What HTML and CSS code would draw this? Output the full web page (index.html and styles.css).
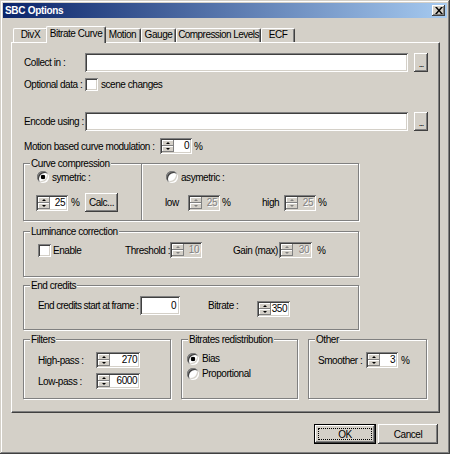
FILE: index.html
```html
<!DOCTYPE html>
<html>
<head>
<meta charset="utf-8">
<title>SBC Options</title>
<link rel="stylesheet" href="styles.css">
</head>
<body>
<div class="window">
  <div class="titlebar">
    <span class="title">SBC Options</span>
    <span class="close"><svg width="8" height="7" viewBox="0 0 8 7"><path d="M0 0h2l2 2.5L6 0h2L5 3.5 8 7H6L4 4.5 2 7H0l3-3.5z"/></svg></span>
  </div>
  <div class="tabs">
    <div class="tab w-divx">DivX</div>
    <div class="tab active w-bitrate">Bitrate Curve</div>
    <div class="tab w-motion">Motion</div>
    <div class="tab w-gauge">Gauge</div>
    <div class="tab w-comp">Compression Levels</div>
    <div class="tab w-ecf">ECF</div>
  </div>
  <div class="panel">
    <div class="row r-collect">
      <span class="lbl w61">Collect in :</span>
      <span class="edit path"></span>
      <span class="btn dots">...</span>
    </div>
    <div class="row r-optional">
      <span class="lbl w61">Optional data :</span>
      <span class="check"></span>
      <span class="ctext">scene changes</span>
    </div>
    <div class="row r-encode">
      <span class="lbl w61">Encode using :</span>
      <span class="edit path"></span>
      <span class="btn dots">...</span>
    </div>
    <div class="row r-motion">
      <span class="lbl w136">Motion based curve modulation :</span>
      <span class="spin w32"><span class="arrows"><i class="up"></i><i class="dn"></i></span><span class="val">0</span></span>
      <span class="pct m2">%</span>
    </div>

    <div class="group g-curve">
      <span class="gtitle">Curve compression</span>
      <div class="cc-left">
        <div class="radio-row"><span class="radio on"></span><span class="rtext">symetric :</span></div>
        <div class="cc-row shift">
          <span class="spin w32"><span class="arrows"><i class="up"></i><i class="dn"></i></span><span class="val">25</span></span>
          <span class="pct m3 w14">%</span>
          <span class="btn calc">Calc...</span>
        </div>
      </div>
      <div class="cc-right">
        <div class="radio-row"><span class="radio"></span><span class="rtext">asymetric :</span></div>
        <div class="cc-row shift">
          <span class="lbl w23">low</span>
          <span class="spin dis w32"><span class="arrows"><i class="up"></i><i class="dn"></i></span><span class="val">25</span></span>
          <span class="pct m2 w40">%</span>
          <span class="lbl w22">high</span>
          <span class="spin dis w32"><span class="arrows"><i class="up"></i><i class="dn"></i></span><span class="val">25</span></span>
          <span class="pct m2">%</span>
        </div>
      </div>
    </div>

    <div class="group g-lum">
      <span class="gtitle">Luminance correction</span>
      <div class="grow-row">
        <span class="check"></span>
        <span class="lbl w72 m2">Enable</span>
        <span class="lbl w45">Threshold :</span>
        <span class="spin dis w32"><span class="arrows"><i class="up"></i><i class="dn"></i></span><span class="val">10</span></span>
        <span class="lbl w46 m31">Gain (max) :</span>
        <span class="spin dis w33"><span class="arrows"><i class="up"></i><i class="dn"></i></span><span class="val">30</span></span>
        <span class="pct m5">%</span>
      </div>
    </div>

    <div class="group g-end">
      <span class="gtitle">End credits</span>
      <div class="end-row">
        <span class="lbl w102 tight">End credits start at frame :</span>
        <span class="edit num">0</span>
        <span class="lbl w49 m28">Bitrate :</span>
        <span class="spin w33 low"><span class="arrows"><i class="up"></i><i class="dn"></i></span><span class="val">350</span></span>
      </div>
    </div>

    <div class="bottom-groups">
      <div class="group g-filters">
        <span class="gtitle">Filters</span>
        <div class="f-row">
          <span class="lbl w58">High-pass :</span>
          <span class="spin w44"><span class="arrows"><i class="up"></i><i class="dn"></i></span><span class="val">270</span></span>
        </div>
        <div class="f-row second">
          <span class="lbl w58">Low-pass :</span>
          <span class="spin w44"><span class="arrows"><i class="up"></i><i class="dn"></i></span><span class="val">6000</span></span>
        </div>
      </div>
      <div class="group g-redist">
        <span class="gtitle">Bitrates redistribution</span>
        <div class="radio-row tall"><span class="radio on"></span><span class="rtext">Bias</span></div>
        <div class="radio-row tall second"><span class="radio"></span><span class="rtext">Proportional</span></div>
      </div>
      <div class="group g-other">
        <span class="gtitle">Other</span>
        <div class="f-row">
          <span class="lbl w48">Smoother :</span>
          <span class="spin w32"><span class="arrows"><i class="up"></i><i class="dn"></i></span><span class="val">3</span></span>
          <span class="pct m3">%</span>
        </div>
      </div>
    </div>
  </div>
  <div class="buttons">
    <span class="btn ok"><span class="focus">OK</span></span>
    <span class="btn cancel">Cancel</span>
  </div>
</div>
</body>
</html>
```

FILE: styles.css
```css
* { box-sizing: border-box; }
html, body { margin: 0; padding: 0; }
body {
  width: 450px;
  height: 454px;
  overflow: hidden;
  background: #d4d0c8;
  color: #000;
  font-family: "Liberation Sans", Arial, sans-serif;
  font-size: 10px;
  letter-spacing: -0.45px;
}

.window {
  width: 450px;
  height: 454px;
  padding: 3px;
  display: flex;
  flex-direction: column;
  background: #d4d0c8;
  box-shadow: inset -1px -1px #404040, inset 1px 1px #d4d0c8, inset -2px -2px #808080, inset 2px 2px #fff;
}

/* title bar */
.titlebar {
  flex: none;
  height: 15px;
  display: flex;
  align-items: center;
  justify-content: space-between;
  padding: 0 2px 0 2px;
  background: linear-gradient(to right, #0a246a, #a6caf0);
}
.title { color: #fff; font-weight: bold; letter-spacing: -0.3px; }
.close {
  width: 13px;
  height: 11px;
  display: flex;
  align-items: center;
  justify-content: center;
  background: #d4d0c8;
  box-shadow: inset -1px -1px #404040, inset 1px 1px #fff, inset -2px -2px #808080;
}
.close svg { display: block; }

/* tabs */
.tabs {
  flex: none;
  position: relative;
  z-index: 1;
  height: 16px;
  margin: 8px 0 0 10px;
  display: flex;
  align-items: flex-end;
}
.tab {
  flex: none;
  height: 14px;
  border: 1px solid #fff;
  border-right-color: #404040;
  border-bottom: 0;
  border-radius: 2px 2px 0 0;
  box-shadow: inset -1px 0 #808080;
  text-align: center;
  line-height: 12px;
  white-space: nowrap;
  background: #d4d0c8;
}
.tab.active {
  position: relative;
  z-index: 2;
  height: 17px;
  margin: 0 -2px -1px;
  line-height: 14px;
}
.w-divx { width: 35px; }
.w-bitrate { width: 60px; }
.w-motion { width: 37px; }
.w-gauge { width: 35px; }
.w-comp { width: 85px; letter-spacing: -0.55px; }
.w-ecf { width: 34px; }

/* panel */
.panel {
  flex: none;
  width: 429px;
  height: 371px;
  margin-left: 8px;
  padding-left: 11px;
  border: 1px solid;
  border-color: #fff #404040 #404040 #fff;
  box-shadow: inset -1px -1px #808080;
}

.row { display: flex; align-items: center; padding-left: 1px; }
.r-collect { margin-top: 10px; height: 19px; }
.r-optional { margin-top: 6px; height: 13px; }
.r-encode { margin-top: 21px; height: 19px; }
.r-motion { margin-top: 7px; height: 16px; }

.lbl { flex: none; white-space: nowrap; }
.tight { letter-spacing: -0.6px; }
.w22 { width: 22px; }
.w23 { width: 23px; }
.w45 { width: 45px; }
.w46 { width: 46px; }
.w48 { width: 48px; }
.w49 { width: 49px; }
.w58 { width: 58px; }
.w61 { width: 61px; }
.w72 { width: 72px; }
.w102 { width: 102px; }
.w136 { width: 136px; }
.m2 { margin-left: 2px; }
.m3 { margin-left: 3px; }
.m5 { margin-left: 5px; }
.m28 { margin-left: 28px; }
.m31 { margin-left: 31px; }

/* sunken controls */
.edit, .check, .spin {
  flex: none;
  background: #fff;
  box-shadow: inset 1px 1px #808080, inset -1px -1px #fff, inset 2px 2px #404040, inset -2px -2px #d4d0c8;
}
.edit { height: 19px; }
.edit.path { width: 323px; }
.edit.num {
  width: 40px;
  padding-right: 4px;
  text-align: right;
  line-height: 19px;
}
.check { width: 13px; height: 13px; }
.ctext { margin-left: 3px; white-space: nowrap; }

/* raised buttons */
.btn {
  flex: none;
  display: flex;
  align-items: center;
  justify-content: center;
  background: #d4d0c8;
  box-shadow: inset -1px -1px #404040, inset 1px 1px #fff, inset -2px -2px #808080, inset 2px 2px #d4d0c8;
  white-space: nowrap;
}
.dots {
  width: 14px;
  height: 19px;
  margin-left: 6px;
  line-height: 1;
  padding-top: 3px;
  font-size: 9px;
  letter-spacing: -1px;
}
.calc { width: 33px; height: 19px; }

/* spinner */
.spin {
  display: flex;
  height: 16px;
  padding: 2px;
}
.w32 { width: 32px; }
.w33 { width: 33px; }
.w44 { width: 44px; }
.w14 { width: 14px; }
.w40 { width: 40px; }
.arrows {
  flex: none;
  width: 12px;
  display: flex;
  flex-direction: column;
}
.arrows i {
  flex: 1;
  display: flex;
  align-items: center;
  justify-content: center;
  background: #d4d0c8;
  box-shadow: inset -1px -1px #808080, inset 1px 1px #fff;
}
.arrows i::after {
  content: "";
  width: 0;
  height: 0;
  border-left: 2px solid transparent;
  border-right: 2px solid transparent;
}
.arrows .up::after { border-bottom: 2px solid #000; }
.arrows .dn::after { border-top: 2px solid #000; }
.val {
  flex: 1;
  text-align: right;
  padding-right: 1px;
  line-height: 12px;
  white-space: nowrap;
}
.spin.dis { background: #d4d0c8; }
.spin.dis .val { color: #808080; text-shadow: 1px 1px #fff; }
.spin.dis .up::after { border-bottom-color: #808080; }
.spin.dis .dn::after { border-top-color: #808080; }
.spin.low { align-self: flex-start; margin-top: 5px; }

.pct { flex: none; }

/* radio */
.radio {
  flex: none;
  width: 12px;
  height: 12px;
  border-radius: 50%;
  background: #fff;
  box-shadow: inset 1px 1px #808080, inset -1px -1px #fff, inset 2px 2px #404040, inset -2px -2px #d4d0c8;
}
.radio.on { background: radial-gradient(circle at 50% 50%, #000 0 2px, #fff 2.6px); }
.radio-row { display: flex; align-items: center; height: 12px; }
.radio-row.tall { height: 13px; }
.rtext { margin-left: 3px; white-space: nowrap; }

/* group boxes */
.group {
  position: relative;
  flex: none;
  border: 1px solid #808080;
  box-shadow: inset 1px 1px #fff, 1px 1px #fff;
}
.gtitle {
  position: absolute;
  top: -7px;
  left: 6px;
  padding: 0 1px;
  line-height: 13px;
  background: #d4d0c8;
  white-space: nowrap;
}

.g-curve {
  width: 336px;
  height: 58px;
  margin-top: 9px;
  display: flex;
}
.cc-left {
  flex: none;
  width: 118px;
  padding: 7px 0 0 13px;
  border-right: 1px solid #808080;
  box-shadow: 1px 0 #fff;
}
.cc-right {
  flex: 1;
  padding: 7px 0 0 24px;
}
.cc-row {
  display: flex;
  align-items: center;
  height: 19px;
  margin-top: 10px;
}
.cc-row.shift { margin-left: -1px; }

.g-lum {
  width: 336px;
  height: 46px;
  margin-top: 10px;
  padding: 10px 0 0 14px;
}
.grow-row { display: flex; align-items: center; height: 16px; }

.g-end {
  width: 336px;
  height: 45px;
  margin-top: 8px;
  padding: 10px 0 0 14px;
}
.end-row { display: flex; align-items: center; height: 19px; }

.bottom-groups {
  display: flex;
  margin-top: 9px;
  height: 60px;
}
.g-filters { width: 148px; padding: 12px 0 0 14px; }
.g-redist { width: 117px; margin-left: 10px; padding: 12px 0 0 5px; }
.g-other { width: 119px; margin-left: 10px; padding: 12px 0 0 9px; }
.f-row { display: flex; align-items: center; height: 16px; }
.f-row.second { margin-top: 5px; }
.radio-row.second { margin-top: 2px; }

/* dialog buttons */
.buttons {
  flex: none;
  display: flex;
  justify-content: flex-end;
  gap: 2px;
  margin-top: 11px;
  padding-right: 9px;
}
.ok {
  width: 62px;
  height: 20px;
  border: 1px solid #000;
  padding: 3px;
}
.focus {
  flex: 1;
  align-self: stretch;
  display: flex;
  align-items: center;
  justify-content: center;
  border: 1px dotted #000;
}
.cancel { width: 60px; height: 20px; }
```
